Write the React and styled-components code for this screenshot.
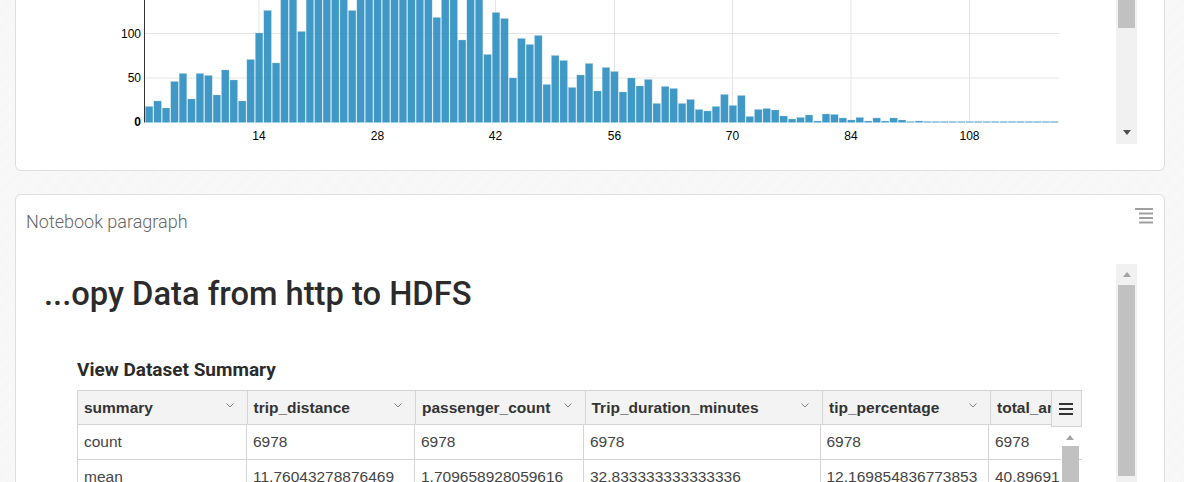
import React from 'react';
import styled, { createGlobalStyle } from 'styled-components';

const GlobalStyle = createGlobalStyle`
  html, body {
    margin: 0;
    padding: 0;
    height: 482px;
    overflow: hidden;
    background: #f7f7f7;
  }
`;

const Page = styled.div`
  height: 482px;
  overflow: hidden;
  box-sizing: border-box;
  padding: 0 19px 0 15px;
  display: flex;
  flex-direction: column;
  gap: 23px;
  background: repeating-linear-gradient(135deg, #f9f9f9 0 1px, #f6f6f6 1px 2px);
`;

const ChartCard = styled.section`
  flex: none;
  height: 171px;
  box-sizing: border-box;
  display: flex;
  background: #fff;
  border: 1px solid #dedede;
  border-top: none;
  border-radius: 0 0 6px 6px;
`;

const ChartSvg = styled.svg`
  display: block;
  flex: none;
  width: 1100px;
  height: 143px;
`;

const Scrollbar = styled.div`
  flex: none;
  width: 21px;
  height: ${p => p.$height};
  box-sizing: border-box;
  padding: 0 2px;
  background: #f1f1f1;
  display: flex;
  flex-direction: column;
  align-items: center;
`;

const Thumb = styled.div`
  flex: none;
  width: 17px;
  height: ${p => p.$height}px;
  background: #c1c1c1;
`;

const ArrowDown = styled.div`
  margin-top: 102px;
  width: 0;
  height: 0;
  border-left: 4.5px solid transparent;
  border-right: 4.5px solid transparent;
  border-top: 5px solid #505050;
`;

const ArrowUp = styled.div`
  flex: none;
  margin: ${p => p.$margin};
  width: 0;
  height: 0;
  border-left: 4.5px solid transparent;
  border-right: 4.5px solid transparent;
  border-bottom: 5px solid #a3a3a3;
`;

const ParagraphCard = styled.section`
  position: relative;
  flex: 1;
  min-height: 0;
  box-sizing: border-box;
  background: #fff;
  border: 1px solid #dedede;
  border-bottom: none;
  border-radius: 6px 6px 0 0;
  overflow: hidden;
`;

const CardTitle = styled.div`
  height: 69px;
  box-sizing: border-box;
  padding: 15px 0 0 10px;
  font-family: Roboto, "Liberation Sans", sans-serif;
  font-weight: 300;
  font-size: 18px;
  line-height: 24px;
  color: #666;
`;

const CardMenu = styled.svg`
  position: absolute;
  top: 13px;
  right: 11px;
  width: 18px;
  height: 17px;
`;

const CardBody = styled.div`
  display: flex;
`;

const Output = styled.div`
  flex: none;
  width: 1100px;
  box-sizing: border-box;
`;

const Heading = styled.h1`
  margin: 0;
  padding: 8px 0 0 28px;
  font-family: Roboto, "Liberation Sans", sans-serif;
  font-weight: 500;
  font-size: 32.7px;
  line-height: 44px;
  color: #2b2b2b;
`;

const SubHeading = styled.h3`
  margin: 0;
  padding: 41px 0 0 61px;
  font-family: Roboto, "Liberation Sans", sans-serif;
  font-weight: 700;
  font-size: 19px;
  line-height: 26px;
  color: #2b2b2b;
`;

const Grid = styled.div`
  position: relative;
  margin: 7px 0 0 61px;
  width: 1005px;
  overflow: hidden;
  font-family: "Liberation Sans", Arial, sans-serif;
  font-size: 14px;
  color: #333;
`;

const HeaderRow = styled.div`
  display: flex;
  height: 35px;
  box-sizing: border-box;
  background: #f3f3f3;
  border: 1px solid #d4d4d4;
`;

const HeaderCell = styled.div`
  flex: none;
  width: ${p => p.$w}px;
  box-sizing: border-box;
  display: flex;
  align-items: center;
  justify-content: space-between;
  padding: 0 13px 0 6px;
  border-right: 1px solid #d4d4d4;
  font-weight: 700;
  font-size: 15.5px;
  white-space: nowrap;
  overflow: hidden;
`;

const Chevron = styled.svg`
  flex: none;
  width: 8px;
  height: 5px;
  margin-top: -4px;
`;

const Row = styled.div`
  display: flex;
  height: 35px;
  box-sizing: border-box;
  border-left: 1px solid #d4d4d4;
  border-bottom: 1px solid #d4d4d4;
`;

const Cell = styled.div`
  flex: none;
  width: ${p => p.$w}px;
  box-sizing: border-box;
  padding: 0 6px;
  line-height: 34px;
  font-size: 15.5px;
  color: #444;
  border-right: 1px solid #d4d4d4;
  white-space: nowrap;
  overflow: hidden;
`;

const GridMenu = styled.div`
  position: absolute;
  top: 0;
  right: 0;
  width: 31px;
  height: 37px;
  box-sizing: border-box;
  padding-right: 2px;
  display: flex;
  align-items: center;
  justify-content: center;
  background: #f3f3f3;
  border: 1px solid #d4d4d4;
`;

const GridScroll = styled.div`
  position: absolute;
  top: 37px;
  right: 3px;
  width: 18px;
  height: 60px;
  background: #fff;
  display: flex;
  flex-direction: column;
  align-items: center;
`;

const Bars = [
  16, 21.5, 14.5, 41, 49, 23.5, 49, 47, 27.5, 52.5, 42.5, 21.5, 63, 89.5, 112, 59.5,
  140, 140, 91, 140, 140, 140, 140, 140, 112, 140, 140, 140, 140, 140, 140, 140, 140, 140,
  105, 140, 140, 82.5, 140, 140, 68, 110, 104, 44.5, 84, 78, 87, 38, 67, 62, 35, 47.5,
  59, 31.5, 55, 51, 30.5, 44.5, 36.5, 43, 19, 36, 34, 19, 23, 13, 11.5, 16, 28, 17, 27,
  6, 13, 14, 12.5, 6.5, 3.5, 5, 7.5, 1.5, 8.5, 8, 4.5, 2.5, 5, 1.5, 4.5, 1.5, 4.5, 2.5, 1,
  1.5, ...Array(16).fill(1),
];

const XTicks = [
  [259, '14'], [377.5, '28'], [495.5, '42'], [614.5, '56'], [732.5, '70'], [851, '84'], [969.5, '108'],
];
const YTicks = [[33.5, '100'], [78, '50']];
const BASE = 122.5;
const STEP = 8.46;

const Histogram = () => (
  <ChartSvg viewBox="16 0 1100 143">
    {XTicks.map(([x]) => (
      <line key={x} x1={x} x2={x} y1={0} y2={BASE} stroke="#e5e5e5" />
    ))}
    {YTicks.map(([y]) => (
      <line key={y} x1={145} x2={1059} y1={y} y2={y} stroke="#e5e5e5" />
    ))}
    {Bars.map((h, i) => (
      <rect
        key={i}
        x={145.4 + i * STEP}
        y={BASE - h}
        width={7.5}
        height={h}
        fill="#2f8fc0"
        fillOpacity={0.92}
        stroke="#a6d0e6"
        strokeWidth={0.3}
      />
    ))}
    <line x1={144.5} x2={144.5} y1={0} y2={BASE} stroke="#333" />
    <g fontFamily="'Liberation Sans', Arial, sans-serif" fontSize="12" fill="#000">
      {YTicks.map(([y, label]) => (
        <text key={label} x={141} y={y + 4} textAnchor="end">{label}</text>
      ))}
      <text x={141} y={126} textAnchor="end" fontWeight="700">0</text>
      {XTicks.map(([x, label]) => (
        <text key={label} x={x} y={140} textAnchor="middle">{label}</text>
      ))}
    </g>
  </ChartSvg>
);

const headers = [
  ['summary', 169.5], ['trip_distance', 168.5], ['passenger_count', 169.5],
  ['Trip_duration_minutes', 237.5], ['tip_percentage', 168], ['total_amount', 100],
];
const cellWidths = [169, 168, 169, 236.5, 168.5, 100];
const rows = [
  ['count', '6978', '6978', '6978', '6978', '6978'],
  ['mean', '11.76043278876469', '1.709658928059616', '32.833333333333336', '12.169854836773853', '40.89691'],
];

export default function App() {
  return (
    <Page>
      <GlobalStyle />
      <ChartCard>
        <Histogram />
        <Scrollbar $height="144px">
          <Thumb $height={28} />
          <ArrowDown />
        </Scrollbar>
      </ChartCard>

      <ParagraphCard>
        <CardTitle>Notebook paragraph</CardTitle>
        <CardMenu viewBox="0 0 18 17">
          <g stroke="#a0a0a0" strokeWidth="1.8">
            <line x1="0" x2="18" y1="1" y2="1" />
            <line x1="4" x2="18" y1="5.5" y2="5.5" />
            <line x1="4" x2="18" y1="10" y2="10" />
            <line x1="4" x2="18" y1="14.5" y2="14.5" />
          </g>
        </CardMenu>
        <CardBody>
          <Output>
            <Heading>...opy Data from http to HDFS</Heading>
            <SubHeading>View Dataset Summary</SubHeading>
            <Grid>
              <HeaderRow>
                {headers.map(([name, w]) => (
                  <HeaderCell key={name} $w={w}>
                    {name}
                    <Chevron viewBox="0 0 8 5">
                      <polyline points="0.5,0.5 4,4 7.5,0.5" fill="none" stroke="#777" strokeWidth="0.9" />
                    </Chevron>
                  </HeaderCell>
                ))}
              </HeaderRow>
              {rows.map(row => (
                <Row key={row[0]}>
                  {row.map((value, i) => (
                    <Cell key={i} $w={cellWidths[i]}>{value}</Cell>
                  ))}
                </Row>
              ))}
              <GridMenu>
                <svg width="14" height="12" viewBox="0 0 14 12">
                  <g stroke="#333" strokeWidth="2">
                    <line x1="0" x2="14" y1="1" y2="1" />
                    <line x1="0" x2="14" y1="6" y2="6" />
                    <line x1="0" x2="14" y1="11" y2="11" />
                  </g>
                </svg>
              </GridMenu>
              <GridScroll>
                <ArrowUp $margin="8px 0 6px" />
                <Thumb $height={40} />
              </GridScroll>
            </Grid>
          </Output>
          <Scrollbar $height="220px">
            <ArrowUp $margin="8px 0 8px" />
            <Thumb $height={191} />
          </Scrollbar>
        </CardBody>
      </ParagraphCard>
    </Page>
  );
}
